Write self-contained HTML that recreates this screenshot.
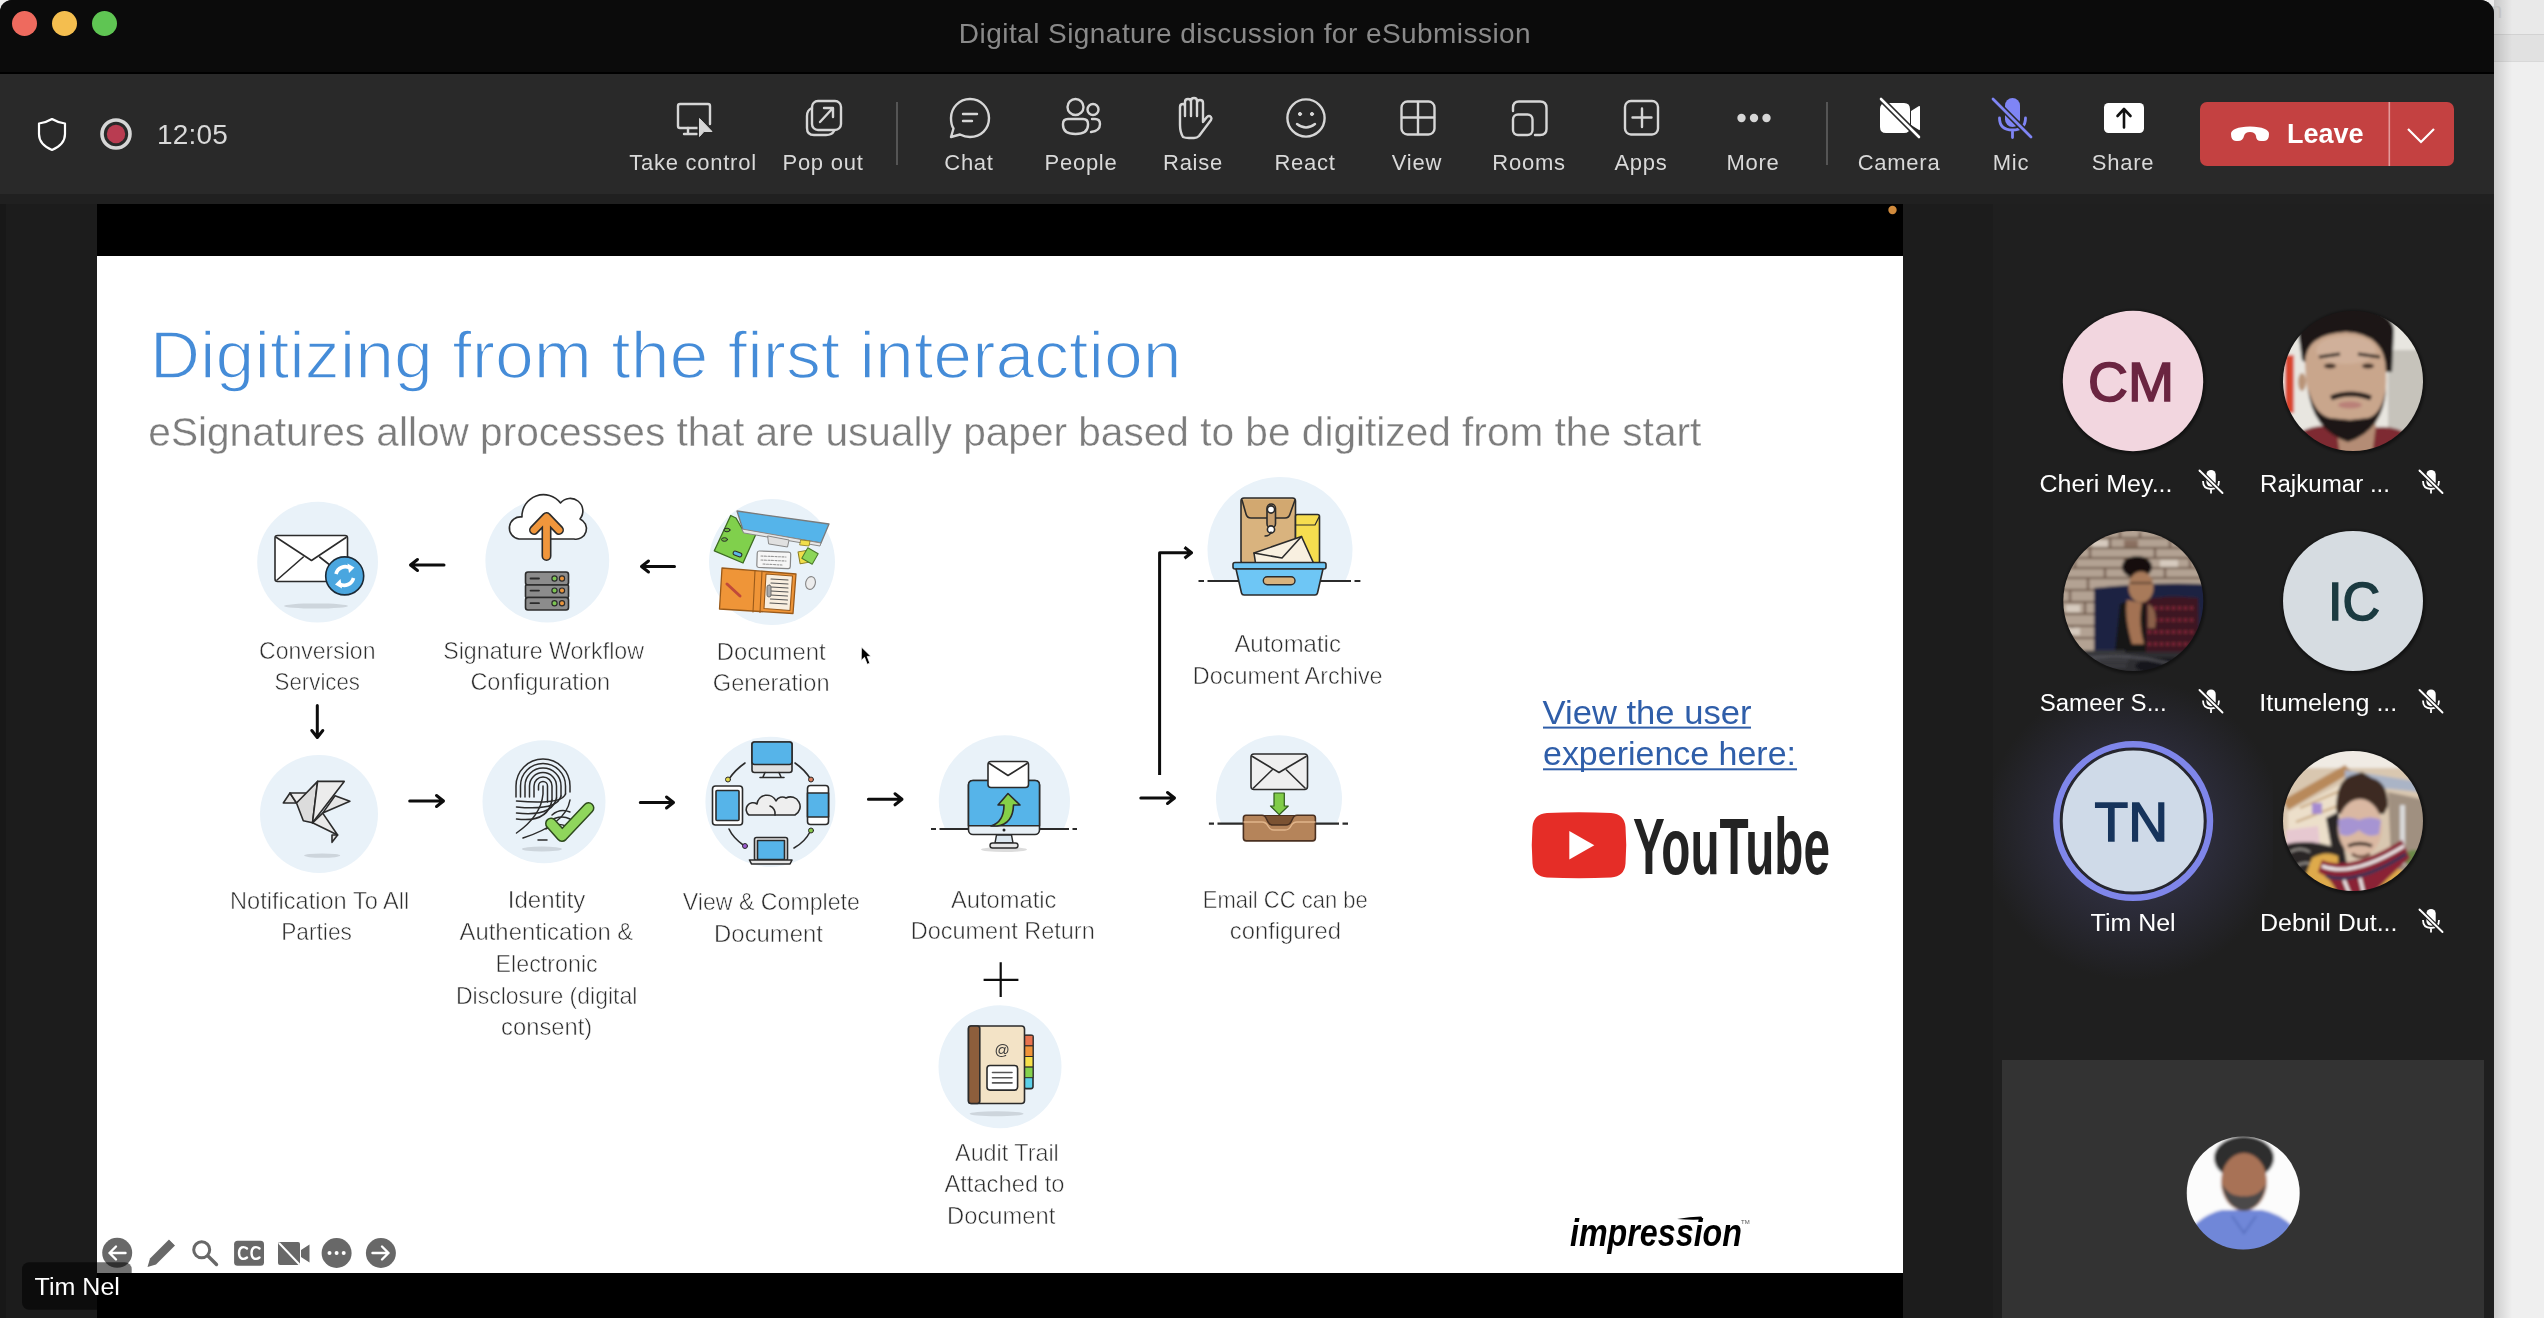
<!DOCTYPE html>
<html><head><meta charset="utf-8">
<style>
html,body{margin:0;padding:0;width:2544px;height:1318px;overflow:hidden;background:#ececec;}
body{position:relative;font-family:"Liberation Sans",sans-serif;}
.a{position:absolute;}
svg,#title,.lab{will-change:transform;}
#outside{left:2494px;top:0;width:50px;height:1318px;background:#efefef;}
#win{left:0;top:0;width:2494px;height:1318px;background:#1c1c1c;border-top-right-radius:14px;border-top-left-radius:12px;overflow:hidden;}
#titlebar{left:0;top:0;width:2494px;height:72px;background:#0b0b0b;border-bottom:2px solid #000;}
.tl{width:25px;height:25px;border-radius:50%;top:11px;}
#title{left:0;top:18px;width:2490px;text-align:center;color:#8a8a8a;font-size:28px;letter-spacing:0.45px;}
#toolbar{left:0;top:74px;width:2494px;height:120px;background:#292929;}
#strip{left:0;top:194px;width:2494px;height:10px;background:#202020;}
.tb{top:0;width:120px;height:121px;}
.tb svg{position:absolute;left:40px;top:26px;}
.tb span{position:absolute;left:-20px;width:160px;top:75px;text-align:center;color:#d9d9d9;font-size:22px;letter-spacing:0.3px;}
.lab{top:150px;width:200px;text-align:center;color:#d9d9d9;font-size:22px;letter-spacing:0.75px;}
.sep{width:2px;background:#4a4a4a;top:29px;height:63px;}
</style></head>
<body>
<div id="outside" class="a"></div>
<div class="a" style="left:2494px;top:0;width:50px;height:34px;background:#e9e9e9;"></div>
<div class="a" style="left:2494px;top:34px;width:50px;height:26px;background:#e1e1e1;border-top:1px solid #d2d2d2;border-bottom:1px solid #d8d8d8;"></div>
<div class="a" style="left:2494px;top:0;width:18px;height:1318px;background:linear-gradient(90deg,rgba(0,0,0,0.14),rgba(0,0,0,0));"></div>
<div class="a" style="left:2490px;top:-2px;font-size:22px;color:#c4c4c4;">n</div>
<div id="win" class="a">
  <div id="titlebar" class="a">
    <div class="a tl" style="left:12px;background:#ee6a5e;"></div>
    <div class="a tl" style="left:52px;background:#f4be4f;"></div>
    <div class="a tl" style="left:92px;background:#5fc553;"></div>
    <div id="title" class="a">Digital Signature discussion for eSubmission</div>
  </div>
  <div id="toolbar" class="a"></div>
  <div id="strip" class="a"></div>

  <svg class="a" style="left:0;top:0;" width="2494" height="200" viewBox="0 0 2494 200">
    <!-- shield -->
    <path d="M52 119 C47 122 43 123 39 123.5 L39 134 C39 142 45 147 52 150 C59 147 65 142 65 134 L65 123.5 C61 123 57 122 52 119 Z" fill="none" stroke="#fff" stroke-width="2.2" stroke-linejoin="round"/>
    <!-- record -->
    <circle cx="116" cy="134" r="14" fill="none" stroke="#d6d6d6" stroke-width="3.6"/>
    <circle cx="116" cy="134" r="9.2" fill="#b93c51"/>
    <g fill="none" stroke="#d6d6d6" stroke-width="2.4" stroke-linecap="round" stroke-linejoin="round">
      <!-- take control -->
      <path d="M700 128 L680 128 Q678 128 678 126 L678 106 Q678 104 680 104 L708 104 Q710 104 710 106 L710 124"/>
      <path d="M688 128 L688 134 M684 134 L697 134"/>
      <!-- pop out -->
      <rect x="812" y="101" width="29" height="29" rx="6"/>
      <path d="M812 108 Q807 110 807 116 L807 128 Q807 135 814 135 L826 135 Q832 135 834 131"/>
      <path d="M820 122 L832 109 M824 108 L833 108 L833 117"/>
      <!-- chat -->
      <path d="M970 99 C981 99 989 108 989 118 C989 129 981 137 970 137 C966 137 963 136 960 134.5 L951 137 L953.5 128.5 C951.5 125.5 951 122 951 118 C951 108 959 99 970 99 Z"/>
      <path d="M963 114 L977 114 M963 121 L972 121"/>
      <!-- people -->
      <circle cx="1075.5" cy="107" r="8"/>
      <circle cx="1093" cy="109.5" r="5.5"/>
      <path d="M1068 119 L1083 119 Q1088 119 1088 124 L1088 125 Q1088 134 1075.5 134 Q1063 134 1063 125 L1063 124 Q1063 119 1068 119 Z"/>
      <path d="M1092 119 L1095 119 Q1100 119 1100 124 Q1100 131 1091 132"/>
      <!-- raise -->
      <path d="M1183 137 Q1180 132 1180 125 L1180 107 Q1180 104 1183 104 Q1185 104 1185 107 L1185 116 L1185 102 Q1185 99 1188 99 Q1191 99 1191 102 L1191 116 L1191 101 Q1191 98 1194 98 Q1197 98 1197 101 L1197 116 L1197 103 Q1197 100 1200 100 Q1203 100 1203 103 L1203 122 L1207 117 Q1209 115 1211 117 Q1212 118 1211 120 L1199 136 Q1197 138 1194 138 L1189 138 Q1185 138 1183 137 Z"/>
      <!-- react -->
      <circle cx="1306" cy="118" r="18.6"/>
      <circle cx="1300" cy="114" r="1.6" fill="#d6d6d6" stroke-width="1"/><circle cx="1312" cy="114" r="1.6" fill="#d6d6d6" stroke-width="1"/>
      <path d="M1297 124 Q1306 131 1315 124"/>
      <!-- view -->
      <rect x="1401.5" y="101.5" width="33" height="33" rx="6"/>
      <path d="M1418 102 L1418 134 M1402 117.5 L1434 117.5"/>
      <!-- rooms -->
      <path d="M1513 111 L1513 108 Q1513 101.5 1519 101.5 L1540 101.5 Q1546.5 101.5 1546.5 108 L1546.5 129 Q1546.5 135 1540 135 L1535 135"/>
      <rect x="1513" y="114.5" width="19.5" height="20.5" rx="5"/>
      <!-- apps -->
      <rect x="1625" y="101" width="33" height="33.5" rx="6"/>
      <path d="M1642 108.5 L1642 127 M1632.5 117.5 L1651.5 117.5"/>
    </g>
    <path d="M697.5 116 L697.5 139 L703.5 133.5 L714 133.5 Z" fill="#292929"/>
    <path d="M699.5 118.5 L699.5 136.5 L704 131.5 L712 131.5 Z" fill="#d6d6d6" stroke="#d6d6d6" stroke-width="1" stroke-linejoin="round"/>
    <circle cx="1741.5" cy="118" r="4.2" fill="#d6d6d6"/>
    <circle cx="1754" cy="118" r="4.2" fill="#d6d6d6"/>
    <circle cx="1766.5" cy="118" r="4.2" fill="#d6d6d6"/>
    <!-- separators -->
    <rect x="896" y="102" width="2" height="63" fill="#555"/>
    <rect x="1826" y="102" width="2" height="63" fill="#555"/>
    <!-- camera -->
    <path d="M1886 103 L1904 103 Q1910 103 1910 109 L1910 127 Q1910 133 1904 133 L1886 133 Q1880 133 1880 127 L1880 109 Q1880 103 1886 103 Z M1911 111 L1919 106 Q1920 105.5 1920 107 L1920 129 Q1920 130.5 1919 130 L1911 125 Z" fill="#fff"/>
    <path d="M1881 99 L1919 137" stroke="#292929" stroke-width="6"/>
    <path d="M1881 99 L1919 137" stroke="#fff" stroke-width="2.6" stroke-linecap="round"/>
    <!-- mic -->
    <rect x="2005" y="98" width="15" height="29" rx="7.5" fill="#7f85f5"/>
    <path d="M1999.5 118 Q1999.5 130 2012.5 130 Q2025.5 130 2025.5 118 M2012.5 130 L2012.5 137.5" fill="none" stroke="#7f85f5" stroke-width="2.8" stroke-linecap="round"/>
    <path d="M1993 99 L2031 137" stroke="#292929" stroke-width="6"/>
    <path d="M1993 99 L2031 137" stroke="#7f85f5" stroke-width="2.8" stroke-linecap="round"/>
    <!-- share -->
    <rect x="2104" y="103" width="40" height="30" rx="4.5" fill="#fff"/>
    <path d="M2124 127.5 L2124 109 M2117.5 116 L2124 109 L2130.5 116" fill="none" stroke="#111" stroke-width="2.6" stroke-linecap="round" stroke-linejoin="round"/>
    <!-- leave -->
    <rect x="2200" y="102" width="254" height="64" rx="7" fill="#c44141"/>
    <rect x="2388.5" y="102" width="1.6" height="64" fill="#e39a9a"/>
    <path d="M2231 134 Q2231 127 2250 126.5 Q2269 127 2269 134 Q2269 141 2264 141 L2261 141 Q2256 141 2256 136 Q2255 132 2250 132 Q2245 132 2244 136 Q2243 141 2238 141 L2236 141 Q2231 141 2231 134 Z" fill="#fff"/>
    <path d="M2408 129 L2421 142 L2434 129" fill="none" stroke="#fff" stroke-width="2.2"/>
  </svg>
  <div class="a" style="left:157px;top:119px;font-size:28px;color:#d9d9d9;letter-spacing:0.2px;">12:05</div>
  <div class="a" style="left:2287px;top:119px;font-size:27px;font-weight:bold;color:#fff;">Leave</div>
  <div class="a lab" style="left:593px;">Take control</div>
  <div class="a lab" style="left:723px;">Pop out</div>
  <div class="a lab" style="left:869px;">Chat</div>
  <div class="a lab" style="left:981px;">People</div>
  <div class="a lab" style="left:1093px;">Raise</div>
  <div class="a lab" style="left:1205px;">React</div>
  <div class="a lab" style="left:1317px;">View</div>
  <div class="a lab" style="left:1429px;">Rooms</div>
  <div class="a lab" style="left:1541px;">Apps</div>
  <div class="a lab" style="left:1653px;">More</div>
  <div class="a lab" style="left:1799px;">Camera</div>
  <div class="a lab" style="left:1911px;">Mic</div>
  <div class="a lab" style="left:2023px;">Share</div>

<svg class="a" style="left:0;top:0;" width="2544" height="1318" viewBox="0 0 2544 1318" font-family="Liberation Sans, sans-serif">
<rect x="97" y="204" width="1806" height="1114" fill="#000"/>
<rect x="97" y="256" width="1806" height="1017" fill="#fff"/>
<circle cx="1892.5" cy="210" r="4.2" fill="#d08a3c"/>
<g id="circles" fill="#e9f2f9">
  <circle cx="317.6" cy="562.1" r="60.4"/>
  <circle cx="547.3" cy="560.6" r="61.9"/>
  <circle cx="772" cy="562" r="63"/>
  <circle cx="319" cy="814" r="59"/>
  <circle cx="544" cy="801.7" r="61.5"/>
  <circle cx="770.4" cy="801.7" r="65"/>
  <path d="M945.1 829 A65.6 65.6 0 1 1 1063.7 829 Z"/>
  <path d="M1214.7 581 A72.5 72.5 0 1 1 1345.3 581 Z"/>
  <path d="M1221.3 823.6 A63 63 0 1 1 1336.7 823.6 Z"/>
  <circle cx="1000" cy="1066.8" r="61.5"/>
</g>
<g fill="#cdd5dc">
  <ellipse cx="316" cy="606" rx="32" ry="2.6"/>
  <ellipse cx="322.2" cy="855.6" rx="18" ry="2.2"/>
  <ellipse cx="541.9" cy="849" rx="20" ry="2.5"/>
  <ellipse cx="996.6" cy="1113.7" rx="27" ry="2.5"/>
  <ellipse cx="1004" cy="849.5" rx="23" ry="2.5" fill="#dcdcdc"/>
</g>
<!-- arrows -->
<g fill="none" stroke="#0d0d0d" stroke-width="3" stroke-linecap="round" stroke-linejoin="round">
  <path d="M444 565 L411 565 M417.5 559.5 L410.5 565 L417.5 570.5"/>
  <path d="M674.5 566.5 L642 566.5 M648.5 561 L641.5 566.5 L648.5 572"/>
  <path d="M409.7 801 L443 801 M436.5 795.5 L443.5 801 L436.5 806.5"/>
  <path d="M640.3 802.5 L673 802.5 M666.5 797 L673.5 802.5 L666.5 808"/>
  <path d="M868.4 799.3 L901.5 799.3 M895 793.8 L902 799.3 L895 804.8"/>
  <path d="M1140.8 798 L1174 798 M1167.5 792.5 L1174.5 798 L1167.5 803.5"/>
  <path d="M317.3 705.5 L317.3 737 M311.8 730.5 L317.3 737.5 L322.8 730.5"/>
  <path d="M1159.6 775 L1159.6 552.7 L1191 552.7 M1184.5 547.2 L1191.5 552.7 L1184.5 558.2" stroke-linecap="butt" stroke-width="3"/>
  <path d="M983.6 979.8 L1018.4 979.8 M1000.7 962.3 L1000.7 997" stroke-width="2.2" stroke-linecap="butt"/>
</g>
<!-- dashed floor lines -->
<g stroke="#2b2b2b" stroke-width="2.2" fill="none">
  <path d="M931 829 L936 829 M939.5 829 L1069 829 M1072.5 829 L1077 829"/>
  <path d="M1198.5 581 L1204 581 M1207.5 581 L1351 581 M1354.5 581 L1360.4 581"/>
  <path d="M1208.9 823.6 L1214 823.6 M1217.5 823.6 L1339 823.6 M1342.5 823.6 L1348 823.6"/>
</g>
<g stroke="#2b2b2b" stroke-width="1.6" stroke-linejoin="round" stroke-linecap="round">
  <!-- 1 conversion -->
  <rect x="275" y="535.5" width="72.5" height="46" rx="2.5" fill="#fff"/>
  <path d="M276.5 537.5 L311.5 560.5 L346 537.5" fill="none"/>
  <path d="M277 580 L303.3 557 M319.6 557 L335 569" fill="none"/>
  <circle cx="344.7" cy="575.9" r="19" fill="#4aa6df" stroke="#1c2a36"/>
  <path d="M336 574 A9.5 9.5 0 0 1 350 568" fill="none" stroke="#fff" stroke-width="3.6" stroke-linecap="butt"/>
  <path d="M347.5 563.5 L354.5 567.5 L349 573 Z" fill="#fff" stroke="none"/>
  <path d="M353.5 578 A9.5 9.5 0 0 1 339.5 584" fill="none" stroke="#fff" stroke-width="3.6" stroke-linecap="butt"/>
  <path d="M342 588.5 L335 584.5 L340.5 579 Z" fill="#fff" stroke="none"/>
  <!-- 2 workflow -->
  <path d="M519 539 A11 11 0 1 1 522 517 A21.5 21.5 0 0 1 560.5 503 A12.5 12.5 0 0 1 580 519 A10.5 10.5 0 0 1 574 539 Z" fill="#fff"/>
  <path d="M546.5 556 L546.5 518 M534 530 L546.5 517 L559 530" fill="none" stroke-width="10"/>
  <path d="M546.5 556 L546.5 518 M534 530 L546.5 517 L559 530" fill="none" stroke="#f0963c" stroke-width="6.8"/>
  <rect x="525.5" y="572" width="43" height="13" rx="2.5" fill="#8c8c8c"/>
  <rect x="525.5" y="585" width="43" height="12.5" rx="1" fill="#8c8c8c"/>
  <rect x="525.5" y="597.5" width="43" height="12.5" rx="2.5" fill="#8c8c8c"/>
  <path d="M530.5 578.5 L539 578.5 M530.5 590.6 L539 590.6 M530.5 603.2 L539 603.2" fill="none" stroke-width="1.8"/>
  <g stroke-width="1.2">
    <circle cx="554.5" cy="578.5" r="2.6" fill="#7cc552"/><circle cx="562" cy="578.5" r="2.6" fill="#e9943c"/>
    <circle cx="554.5" cy="590.6" r="2.6" fill="#7cc552"/><circle cx="562" cy="590.6" r="2.6" fill="#e9943c"/>
    <circle cx="554.5" cy="603.2" r="2.6" fill="#7cc552"/><circle cx="562" cy="603.2" r="2.6" fill="#e9943c"/>
  </g>
  <!-- 3 doc generation -->
  <path d="M714.3 550.8 L730.7 515.5 L736 518 L742 528.5 L756 534 L743 563 Z" fill="#80d04c" stroke="#3d6b22" stroke-width="1.3"/>
  <ellipse cx="727" cy="530" rx="3" ry="1.8" fill="#6ab83c" stroke-width="1"/>
  <ellipse cx="724.5" cy="539.5" rx="3" ry="1.8" fill="#6ab83c" stroke-width="1"/>
  <rect x="733" y="552" width="9" height="4" rx="2" fill="#5cb8e8" stroke-width="1" transform="rotate(20 737.5 554)"/>
  <path d="M737 511 L829 524 L821 543 L743 530 Z" fill="#55b4ea" stroke="#7a7a7a" stroke-width="1.3"/>
  <path d="M742 529 L821 543 L820 546 L744 533 Z" fill="#e6e6e6" stroke="#888" stroke-width="1"/>
  <path d="M768 536 L789 540 L787.5 547 L769 544 Z" fill="#e0e0e0" stroke="#888" stroke-width="1"/>
  <path d="M801 540 L810 541 L809 546 L800 545 Z" fill="#f1de4a" stroke="#8a7a20" stroke-width="0.8"/>
  <rect x="757" y="551.5" width="33.5" height="16.5" rx="2" fill="#f6f6f6" stroke="#888" stroke-width="1.2" transform="rotate(2 773 560)"/>
  <path d="M761 556 L786 557 M761 560 L786 561 M763 564 L782 565" stroke="#999" stroke-width="1.1" stroke-dasharray="2 1.5"/>
  <rect x="799" y="551" width="10" height="12" fill="#f1de4a" stroke="#8a7a20" stroke-width="1" transform="rotate(-10 804 557)"/>
  <rect x="804" y="550" width="12" height="12" fill="#8cd658" stroke="#4a7a2a" stroke-width="1" transform="rotate(30 810 556)"/>
  <ellipse cx="810.5" cy="583" rx="4.8" ry="6.5" fill="#ececec" stroke="#888" stroke-width="1.1" transform="rotate(15 810.5 583)"/>
  <path d="M722 568 L796 574 L793 613.5 L719.5 609 Z" fill="#ef9538" stroke="#9a5a1a" stroke-width="1.3"/>
  <path d="M755 570.5 L753 612 M762 571 L760 612.5" fill="none" stroke="#9a5a1a" stroke-width="1.1"/>
  <path d="M766 574 L792.5 576 L790 610.5 L764 608.5 Z" fill="#f8eedf" stroke="#9a5a1a" stroke-width="1.1"/>
  <path d="M771 579 L788 580 M771 583 L788 584 M771 587 L788 588 M771 591 L788 592 M770.5 595 L787.5 596 M770.5 599 L787.5 600 M770 603 L787 604" stroke="#555" stroke-width="1.1"/>
  <rect x="767" y="585" width="4" height="12" rx="2" fill="#aaa" stroke="#666" stroke-width="0.9"/>
  <path d="M727 584 L740 596" stroke="#c04a3a" stroke-width="3"/>
  <!-- 4 bird -->
  <path d="M283.3 803 L290 793 L296.5 803 Z" fill="#e3e3e3"/>
  <path d="M290 793 L307.4 793 L296.5 803 Z" fill="#ededed"/>
  <path d="M317.6 781.4 L296.5 803 L303.3 820.8 L312.5 822.8 Z" fill="#dcdcdc"/>
  <path d="M317.6 781.4 L344.2 781.4 L312.5 822.8 Z" fill="#ececec"/>
  <path d="M335 795.7 L349.9 801.3 L322.7 813.1 Z" fill="#e6e6e6"/>
  <path d="M322.7 813.1 L337.6 835 L312.5 822.8 Z" fill="#e9e9e9"/>
  <path d="M332 835 L337.6 835 L332 842.3 Z" fill="#e3e3e3"/>
  <!-- 5 fingerprint -->
  <g fill="none" stroke-width="1.5">
    <path d="M516 797 L516 786 A27 27 0 0 1 570 786 L570 792"/>
    <path d="M520.5 797 L520.5 786 A22.5 22.5 0 0 1 565.5 786 L565.5 794"/>
    <path d="M525 797 L525 786 A18 18 0 0 1 561 786 L561 796"/>
    <path d="M529.5 797 L529.5 786 A13.5 13.5 0 0 1 556.5 786 L556.5 798"/>
    <path d="M534 797 L534 786 A9 9 0 0 1 552 786 L552 800"/>
    <path d="M538.5 790 L538.5 786 A4.5 4.5 0 0 1 547.5 786 L547.5 802"/>
    <path d="M543 786 L543 794 Q541 816 516.5 833"/>
    <path d="M565.5 794 Q561.5 805 516.5 801"/>
    <path d="M561 796 Q557 811 516.5 807"/>
    <path d="M556.5 798 Q552.5 817 516.5 813"/>
    <path d="M552 800 Q548 823 516.5 819"/>
    <path d="M570 800 Q566 824 523 838"/>
    <path d="M552 815 Q560 808 570 812 M548 822 Q560 814 570 819 M546 829 Q556 822 566 826"/>
    <path d="M538 840 L547 840"/>
  </g>
  <path d="M551 823.5 L562.1 836 L588.5 808" fill="none" stroke="#2e4a1e" stroke-width="12"/>
  <path d="M551 823.5 L562.1 836 L588.5 808" fill="none" stroke="#8fd65c" stroke-width="9" stroke-linecap="round"/>
  <!-- 6 devices -->
  <rect x="752" y="742" width="40" height="30.5" rx="2.5" fill="#e0e0e0"/>
  <rect x="752" y="742" width="40" height="22.5" rx="2.5" fill="#56b4e9"/>
  <path d="M765 772.5 L763 777 M779 772.5 L781 777 M760 777.5 L784 777.5" fill="none" stroke-width="1.6"/>
  <rect x="712.5" y="786" width="30" height="39" rx="3" fill="#fff"/>
  <rect x="716" y="790.5" width="23" height="30" rx="1" fill="#56b4e9"/>
  <rect x="807.5" y="785.5" width="21" height="39" rx="3" fill="#fff"/>
  <rect x="807.5" y="793" width="21" height="24" fill="#56b4e9"/>
  <rect x="754.5" y="837.5" width="33" height="23" rx="2" fill="#e6e6e6"/>
  <rect x="757.5" y="840.5" width="27" height="19" fill="#56b4e9"/>
  <path d="M749.5 860 L792 860 L790 864 L751.5 864 Z" fill="#e6e6e6"/>
  <path d="M749 815 A6 6 0 0 1 757 804 A10 10 0 0 1 776 801 A7 7 0 0 1 786 798 A9 9 0 0 1 795 815 Z" fill="#eeeeee"/>
  <path d="M775 815 A8 8 0 0 0 770 806" fill="none"/>
  <g fill="none" stroke-width="1.6">
    <path d="M745 763 Q735 770 729 779"/>
    <path d="M795 763 Q805 770 810.5 779"/>
    <path d="M729 829 Q733 838 744.5 846"/>
    <path d="M794 848 Q805 842 810.5 831"/>
  </g>
  <circle cx="728" cy="779.5" r="2.5" fill="#e3d84a" stroke-width="1"/>
  <circle cx="811" cy="779.5" r="2.5" fill="#d98060" stroke-width="1"/>
  <circle cx="745" cy="846" r="2.5" fill="#9a5ad0" stroke-width="1"/>
  <circle cx="811" cy="830.5" r="2.5" fill="#86c84a" stroke-width="1"/>
  <!-- 7 auto doc return -->
  <rect x="968.5" y="780.5" width="71" height="54" rx="4.5" fill="#e8f0f6"/>
  <path d="M973 780.5 L1035 780.5 Q1039.5 780.5 1039.5 785 L1039.5 825.7 L968.5 825.7 L968.5 785 Q968.5 780.5 973 780.5 Z" fill="#56b4e9"/>
  <path d="M996.5 835 L995 843 L1013 843 L1011.5 835 Z" fill="#dde8f0" stroke-width="1.4"/>
  <rect x="990" y="843" width="28" height="5" rx="2.5" fill="#e6e6e6" stroke-width="1.4"/>
  <circle cx="1004" cy="830" r="1.5" fill="#222" stroke="none"/>
  <path d="M991 826 Q1004 822 1004 805 L998 805 L1008 793.5 L1020 805 L1013.5 805 Q1013 824 997 826 Z" fill="#86cf48"/>
  <rect x="988" y="761.5" width="40.5" height="26" rx="3" fill="#fff"/>
  <path d="M989.5 763.5 L1008 775.5 L1027 763.5" fill="none"/>
  <!-- 8 archive -->
  <rect x="1241" y="498" width="54.5" height="66" rx="3" fill="#d9b37e"/>
  <path d="M1242 500 L1246 514 Q1247 518 1251 518 L1285 518 Q1289 518 1290 514 L1295 500" fill="#d2a870"/>
  <rect x="1267" y="504" width="8.5" height="24" rx="4.25" fill="#c8a070"/>
  <circle cx="1271" cy="509.5" r="3.6" fill="#fff"/><circle cx="1271" cy="529.5" r="3.6" fill="#fff"/>
  <path d="M1265 536 Q1270 536 1271 532" fill="none" stroke-width="1.3"/>
  <rect x="1295.5" y="514.5" width="24" height="50" rx="2" fill="#f6dd4f"/>
  <path d="M1295.5 525 L1315 525 L1319 517" fill="none" stroke-width="1.2"/>
  <path d="M1254 553 L1301.5 536.5 L1313.5 563 L1255.5 563 Z" fill="#f8f0e0"/>
  <path d="M1254 553 L1282 558 L1301.5 536.5" fill="none"/>
  <path d="M1235 562.5 L1324 562.5 Q1326 562.5 1326 564.5 L1326 567 Q1326 569 1324 569 L1235 569 Q1233 569 1233 567 L1233 564.5 Q1233 562.5 1235 562.5 Z" fill="#6ec6f5"/>
  <path d="M1236 569 L1323 569 L1317.5 593 Q1317 595 1315 595 L1244 595 Q1242 595 1241.5 593 Z" fill="#6ec6f5"/>
  <rect x="1263.3" y="576.7" width="31.7" height="8" rx="4" fill="#d9b37e" stroke-width="1.4"/>
  <!-- 9 email cc -->
  <rect x="1251" y="754" width="56.5" height="35.5" rx="3" fill="#efefef"/>
  <path d="M1252.5 756.5 L1279 772.5 L1306 756.5 M1253.5 788 L1272 770 M1286.5 770 L1305 788" fill="none"/>
  <path d="M1274 793 L1284.3 793 L1284.3 806 L1288.3 806 L1279.2 814.7 L1270.5 806 L1274 806 Z" fill="#80cc48" stroke="#2e5a1a" stroke-width="1.2"/>
  <path d="M1263 815.5 L1296 815.5 L1292 828 L1267 828 Z" fill="#7b5232" stroke="#4a3020" stroke-width="1.2"/>
  <path d="M1246 815.2 L1262 815.2 Q1265 815.2 1266.5 819 L1268 822 Q1269.5 825 1273 825 L1286 825 Q1289.5 825 1291 822 L1292.5 819 Q1294 815.2 1297 815.2 L1313 815.2 Q1315.4 815.2 1315.4 818 L1315.4 838 Q1315.4 840.9 1312.5 840.9 L1246.3 840.9 Q1243.4 840.9 1243.4 838 L1243.4 818 Q1243.4 815.2 1246 815.2 Z" fill="#b5845a" stroke="#4a3020"/>
  
  <path d="M1244 822 L1262 822 Q1266 822 1268 826 Q1270 830 1274 830 L1285 830 Q1289 830 1291 826 Q1293 822 1297 822 L1315 822" fill="none" stroke="#e0b48a" stroke-width="1.4"/>
  <!-- 10 audit -->
  <rect x="1024" y="1035.3" width="9" height="53.3" rx="2" fill="#5bd0e8"/>
  <rect x="1024" y="1035.3" width="9" height="10.6" fill="#e8734f" stroke-width="1"/>
  <rect x="1024" y="1045.9" width="9" height="10.6" fill="#f0943a" stroke-width="1"/>
  <rect x="1024" y="1056.5" width="9" height="10.6" fill="#f7e04a" stroke-width="1"/>
  <rect x="1024" y="1067.1" width="9" height="10.6" fill="#85d24c" stroke-width="1"/>
  <rect x="968.5" y="1026" width="56" height="77.5" rx="3" fill="#f3e3c6"/>
  <rect x="968.5" y="1026" width="11.3" height="77.5" rx="2.5" fill="#8d5e3c"/>
  <text x="994.5" y="1054.5" font-size="15" fill="#3a3a3a" stroke="none" font-family="Liberation Sans, sans-serif">@</text>
  <rect x="987" y="1065.5" width="30.6" height="24.6" rx="3" fill="#fff"/>
  <path d="M992.5 1072.5 L1012 1072.5 M992.5 1077.7 L1012 1077.7 M992.5 1082.9 L1012 1082.9" fill="none" stroke="#555"/>
</g>
<!-- mouse cursor -->
<path d="M861.4 647 L861.2 660.5 L864.5 657.3 L867.2 664.3 L869.8 663.2 L867.2 656.4 L871 656.4 Z" fill="#000" stroke="#fff" stroke-width="0.8"/>
<!-- slide toolbar -->
<g fill="#686868">
  <circle cx="117.2" cy="1252.8" r="15"/>
  <circle cx="336.6" cy="1253" r="15"/>
  <circle cx="380.9" cy="1253" r="15"/>
  <rect x="234.1" y="1240.8" width="29.9" height="24.9" rx="3.5"/>
  <path d="M280 1242 L298 1242 Q300 1242 300 1244 L300 1263 Q300 1265 298 1265 L280 1265 Q278 1265 278 1263 L278 1244 Q278 1242 280 1242 Z M301 1250 L309.5 1244.5 L309.5 1262.5 L301 1257 Z"/>
  <path d="M147.5 1267 L150 1258.5 L169 1239.5 L175 1245.5 L156 1264.5 Z"/>
</g>
<g fill="none" stroke="#686868">
  <circle cx="201.7" cy="1249.8" r="8" stroke-width="3"/>
  <path d="M208 1256 L216.5 1264.5" stroke-width="3.4" stroke-linecap="round"/>
</g>
<g fill="none" stroke="#fff" stroke-width="2.4" stroke-linecap="round" stroke-linejoin="round">
  <path d="M125.5 1253 L109.5 1253 M116 1246.5 L109.5 1253 L116 1259.5"/>
  <path d="M372.5 1253 L388.5 1253 M382 1246.5 L388.5 1253 L382 1259.5"/>
  <path d="M279.5 1243.5 L299 1264" stroke-width="2"/>
  <path d="M170 1238.5 L176 1244.5" stroke-width="2"/>
  <path d="M247 1248.5 Q244.5 1246.5 241.5 1247.5 Q239 1249 239 1253 Q239 1257 241.5 1258.5 Q244.5 1259.5 247 1257.5"/>
  <path d="M259.5 1248.5 Q257 1246.5 254 1247.5 Q251.5 1249 251.5 1253 Q251.5 1257 254 1258.5 Q257 1259.5 259.5 1257.5"/>
</g>
<g fill="#fff"><circle cx="329.5" cy="1253" r="2"/><circle cx="336.6" cy="1253" r="2"/><circle cx="343.7" cy="1253" r="2"/></g>
<!-- Tim Nel name box -->
<rect x="22" y="1262.2" width="109.7" height="47.5" rx="7" fill="rgba(0,0,0,0.55)"/>
<!-- youtube -->
<path d="M1547 813 Q1579 811.5 1611 813 Q1624.5 814 1625.5 827 Q1627 845 1625.5 863.5 Q1624.5 876.5 1611 877.5 Q1579 879 1547 877.5 Q1533.5 876.5 1532.5 863.5 Q1531 845 1532.5 827 Q1533.5 814 1547 813 Z" fill="#e52d27"/>
<path d="M1569.3 831 L1594.3 845.3 L1569.3 859.5 Z" fill="#fff"/>
<!-- impression swoosh & tm -->
<path d="M1677 1219 Q1690 1216.5 1701 1216.5 Q1703 1217.5 1701 1219.5 Q1690 1220 1677 1219 Z" fill="#000"/>
<text x="1741" y="1224" font-size="6" fill="#555" font-family="Liberation Sans, sans-serif">TM</text>

<text x="149.7" y="378" textLength="1032" lengthAdjust="spacingAndGlyphs" font-size="67" fill="#458cd8" font-weight="normal" font-style="normal" stroke="#fff" stroke-width="1.6">Digitizing from the first interaction</text>
<text x="148.3" y="446" textLength="1553" lengthAdjust="spacingAndGlyphs" font-size="41" fill="#7c7c7c" font-weight="normal" font-style="normal" stroke="#fff" stroke-width="0.35">eSignatures allow processes that are usually paper based to be digitized from the start</text>
<text x="259.0" y="659" textLength="116.5" lengthAdjust="spacingAndGlyphs" font-size="24" fill="#2c2c2c" font-weight="normal" font-style="normal" stroke="#fff" stroke-width="0.55">Conversion</text>
<text x="274.6" y="690" textLength="85.4" lengthAdjust="spacingAndGlyphs" font-size="24" fill="#2c2c2c" font-weight="normal" font-style="normal" stroke="#fff" stroke-width="0.55">Services</text>
<text x="443.2" y="659" textLength="200.8" lengthAdjust="spacingAndGlyphs" font-size="24" fill="#2c2c2c" font-weight="normal" font-style="normal" stroke="#fff" stroke-width="0.55">Signature Workflow</text>
<text x="470.4" y="690" textLength="139.8" lengthAdjust="spacingAndGlyphs" font-size="24" fill="#2c2c2c" font-weight="normal" font-style="normal" stroke="#fff" stroke-width="0.55">Configuration</text>
<text x="716.8" y="659.5" textLength="108.8" lengthAdjust="spacingAndGlyphs" font-size="24" fill="#2c2c2c" font-weight="normal" font-style="normal" stroke="#fff" stroke-width="0.55">Document</text>
<text x="712.8" y="690.6" textLength="116.7" lengthAdjust="spacingAndGlyphs" font-size="24" fill="#2c2c2c" font-weight="normal" font-style="normal" stroke="#fff" stroke-width="0.55">Generation</text>
<text x="230.1" y="909" textLength="179.1" lengthAdjust="spacingAndGlyphs" font-size="24" fill="#2c2c2c" font-weight="normal" font-style="normal" stroke="#fff" stroke-width="0.55">Notification To All</text>
<text x="281.2" y="940.4" textLength="70.7" lengthAdjust="spacingAndGlyphs" font-size="24" fill="#2c2c2c" font-weight="normal" font-style="normal" stroke="#fff" stroke-width="0.55">Parties</text>
<text x="507.8" y="908.1" textLength="77.6" lengthAdjust="spacingAndGlyphs" font-size="24" fill="#2c2c2c" font-weight="normal" font-style="normal" stroke="#fff" stroke-width="0.55">Identity</text>
<text x="459.6" y="939.8" textLength="173.6" lengthAdjust="spacingAndGlyphs" font-size="24" fill="#2c2c2c" font-weight="normal" font-style="normal" stroke="#fff" stroke-width="0.55">Authentication &amp;</text>
<text x="495.6" y="971.8" textLength="102.1" lengthAdjust="spacingAndGlyphs" font-size="24" fill="#2c2c2c" font-weight="normal" font-style="normal" stroke="#fff" stroke-width="0.55">Electronic</text>
<text x="456.0" y="1003.7" textLength="181.3" lengthAdjust="spacingAndGlyphs" font-size="24" fill="#2c2c2c" font-weight="normal" font-style="normal" stroke="#fff" stroke-width="0.55">Disclosure (digital</text>
<text x="501.1" y="1035.4" textLength="91.1" lengthAdjust="spacingAndGlyphs" font-size="24" fill="#2c2c2c" font-weight="normal" font-style="normal" stroke="#fff" stroke-width="0.55">consent)</text>
<text x="682.8" y="910.3" textLength="177.1" lengthAdjust="spacingAndGlyphs" font-size="24" fill="#2c2c2c" font-weight="normal" font-style="normal" stroke="#fff" stroke-width="0.55">View &amp; Complete</text>
<text x="714.1" y="941.7" textLength="108.9" lengthAdjust="spacingAndGlyphs" font-size="24" fill="#2c2c2c" font-weight="normal" font-style="normal" stroke="#fff" stroke-width="0.55">Document</text>
<text x="951.0" y="908.1" textLength="105.4" lengthAdjust="spacingAndGlyphs" font-size="24" fill="#2c2c2c" font-weight="normal" font-style="normal" stroke="#fff" stroke-width="0.55">Automatic</text>
<text x="910.8" y="939.3" textLength="183.9" lengthAdjust="spacingAndGlyphs" font-size="24" fill="#2c2c2c" font-weight="normal" font-style="normal" stroke="#fff" stroke-width="0.55">Document Return</text>
<text x="1234.4" y="652.2" textLength="106.5" lengthAdjust="spacingAndGlyphs" font-size="24" fill="#2c2c2c" font-weight="normal" font-style="normal" stroke="#fff" stroke-width="0.55">Automatic</text>
<text x="1192.8" y="683.8" textLength="189.8" lengthAdjust="spacingAndGlyphs" font-size="24" fill="#2c2c2c" font-weight="normal" font-style="normal" stroke="#fff" stroke-width="0.55">Document Archive</text>
<text x="1202.8" y="908" textLength="164.9" lengthAdjust="spacingAndGlyphs" font-size="24" fill="#2c2c2c" font-weight="normal" font-style="normal" stroke="#fff" stroke-width="0.55">Email CC can be</text>
<text x="1229.8" y="939" textLength="111.1" lengthAdjust="spacingAndGlyphs" font-size="24" fill="#2c2c2c" font-weight="normal" font-style="normal" stroke="#fff" stroke-width="0.55">configured</text>
<text x="955.1" y="1160.9" textLength="103.7" lengthAdjust="spacingAndGlyphs" font-size="24" fill="#2c2c2c" font-weight="normal" font-style="normal" stroke="#fff" stroke-width="0.55">Audit Trail</text>
<text x="944.4" y="1191.6" textLength="120.1" lengthAdjust="spacingAndGlyphs" font-size="24" fill="#2c2c2c" font-weight="normal" font-style="normal" stroke="#fff" stroke-width="0.55">Attached to</text>
<text x="947.1" y="1223.5" textLength="108.3" lengthAdjust="spacingAndGlyphs" font-size="24" fill="#2c2c2c" font-weight="normal" font-style="normal" stroke="#fff" stroke-width="0.55">Document</text>
<text x="1542.5" y="724.2" textLength="209" lengthAdjust="spacingAndGlyphs" font-size="34" fill="#2f5ea9" font-weight="normal" font-style="normal" >View the user</text>
<text x="1543" y="765.1" textLength="253" lengthAdjust="spacingAndGlyphs" font-size="34" fill="#2f5ea9" font-weight="normal" font-style="normal" >experience here:</text>
<rect x="1543" y="726.6" width="208" height="2" fill="#2f5ea9"/>
<rect x="1543" y="768.3" width="254" height="2" fill="#2f5ea9"/>
<text x="1633" y="873.7" textLength="197" lengthAdjust="spacingAndGlyphs" font-size="79" fill="#232323" font-weight="bold" font-style="normal" >YouTube</text>
<text x="1570" y="1246" textLength="172" lengthAdjust="spacingAndGlyphs" font-size="39" fill="#000" font-weight="bold" font-style="italic" >impression</text>
<text x="34.5" y="1295" textLength="85.4" lengthAdjust="spacingAndGlyphs" font-size="23" fill="#fff" font-weight="normal" font-style="normal" >Tim Nel</text>
</svg>
<svg class="a" style="left:0;top:0;" width="2544" height="1318" viewBox="0 0 2544 1318" font-family="Liberation Sans, sans-serif">
<defs>
<radialGradient id="glow" cx="2133" cy="830" r="150" gradientUnits="userSpaceOnUse">
  <stop offset="0" stop-color="#3a3a52"/><stop offset="0.55" stop-color="#2b2b38"/><stop offset="1" stop-color="#1f1f1f"/>
</radialGradient>
<clipPath id="cR"><circle cx="2353" cy="381" r="70"/></clipPath>
<clipPath id="cS"><circle cx="2133.3" cy="601" r="70"/></clipPath>
<clipPath id="cD"><circle cx="2353" cy="821" r="70"/></clipPath>
<clipPath id="cB"><circle cx="2243.2" cy="1193" r="56.5"/></clipPath>
<filter id="blur1"><feGaussianBlur stdDeviation="1.5"/></filter>
<filter id="blur3"><feGaussianBlur stdDeviation="3"/></filter>
</defs>
<rect x="1903" y="204" width="591" height="1114" fill="#1c1c1c"/>
<rect x="0" y="204" width="6" height="1114" fill="#181818"/>
<rect x="1993" y="204" width="501" height="1114" fill="#1f1f1f"/>
<rect x="1993" y="680" width="280" height="300" fill="url(#glow)"/>
<rect x="2002" y="1060" width="482" height="258" fill="#333"/>
<circle cx="2133.5" cy="382" r="72.0" fill="rgba(0,0,0,0.45)" filter="url(#blur1)"/>
<circle cx="2353.5" cy="382" r="71.8" fill="rgba(0,0,0,0.45)" filter="url(#blur1)"/>
<circle cx="2133.8" cy="602" r="71.8" fill="rgba(0,0,0,0.45)" filter="url(#blur1)"/>
<circle cx="2353.5" cy="602" r="71.8" fill="rgba(0,0,0,0.45)" filter="url(#blur1)"/>
<circle cx="2353.5" cy="822" r="71.8" fill="rgba(0,0,0,0.45)" filter="url(#blur1)"/>
<circle cx="2133" cy="381" r="70.2" fill="#f2d6df"/>
<text stroke="#6b2541" stroke-width="1.6" x="2088" y="400.9" textLength="86" lengthAdjust="spacingAndGlyphs" font-size="56" fill="#6b2541" font-weight="normal">CM</text>
<circle cx="2353" cy="601" r="70" fill="#d6dce1"/>
<text stroke="#1b3a40" stroke-width="1.6" x="2328" y="620.1" textLength="52" lengthAdjust="spacingAndGlyphs" font-size="54" fill="#1b3a40" font-weight="normal">IC</text>
<circle cx="2133.2" cy="821.1" r="76.5" fill="none" stroke="#7f86ea" stroke-width="7"/>
<circle cx="2133.2" cy="821.1" r="72" fill="#cfdae8" stroke="#26262e" stroke-width="3"/>
<text stroke="#17345c" stroke-width="1.6" x="2094.5" y="840.8" textLength="73.5" lengthAdjust="spacingAndGlyphs" font-size="55.6" fill="#17345c" font-weight="normal">TN</text>
<g clip-path="url(#cR)"><g filter="url(#blur1)">
  <rect x="2280" y="308" width="146" height="146" fill="#e8e6e0"/>
  <rect x="2388" y="350" width="38" height="95" fill="#c6c3bb"/>
  <rect x="2285" y="355" width="9" height="58" fill="#d9442f"/>
  <path d="M2290 455 L2300 432 Q2320 422 2340 428 L2372 428 Q2395 424 2410 436 L2420 455 Z" fill="#7e2b31"/>
  <path d="M2336 424 L2376 424 L2372 455 L2340 455 Z" fill="#b48c74"/>
  <path d="M2298 330 Q2300 308 2345 306 Q2392 308 2394 330 L2392 372 L2384 372 Q2380 340 2346 334 Q2312 336 2312 368 L2302 360 Z" fill="#1b1816"/>
  <path d="M2305 365 Q2304 334 2346 332 Q2386 334 2386 372 Q2388 412 2370 430 Q2350 444 2330 430 Q2306 412 2305 365 Z" fill="#c9a68c"/>
  <ellipse cx="2346" cy="350" rx="30" ry="14" fill="#d0b09a"/>
  <path d="M2308 388 Q2312 430 2348 442 Q2384 430 2386 388 Q2382 414 2368 418 L2350 420 L2330 418 Q2314 414 2308 388 Z" fill="#1d1715"/>
  <path d="M2331 398 Q2350 390 2371 398" stroke="#1d1715" stroke-width="5" fill="none"/>
  <ellipse cx="2350" cy="405" rx="12" ry="3.5" fill="#b98078"/>
  <path d="M2319 357 L2340 354 M2358 354 L2380 357" stroke="#221a16" stroke-width="3.2"/>
  <ellipse cx="2330" cy="366" rx="6" ry="2.6" fill="#3a2a22"/><ellipse cx="2368" cy="366" rx="6" ry="2.6" fill="#3a2a22"/>
  <ellipse cx="2302" cy="382" rx="4" ry="9" fill="#b99478"/>
</g></g>
<g clip-path="url(#cS)"><g filter="url(#blur1)">
  <rect x="2060" y="528" width="146" height="146" fill="#b3a293"/>
  <g stroke="#6e5848" stroke-width="2.2">
  <path d="M2060 538 L2206 538 M2060 548 L2206 548 M2060 558 L2206 558 M2060 568 L2206 568 M2060 578 L2206 578 M2060 590 L2097 590 M2060 602 L2097 602 M2060 614 L2097 614 M2060 626 L2097 626 M2060 638 L2097 638"/>
  <path d="M2080 532 L2080 538 M2110 538 L2110 548 M2140 532 L2140 538 M2170 538 L2170 548 M2090 548 L2090 558 M2155 548 L2155 558 M2075 558 L2075 568 M2190 558 L2190 568 M2070 590 L2070 602 M2085 602 L2085 614 M2072 626 L2072 638 M2120 528 L2120 538 M2185 528 L2185 538 M2125 558 L2125 568 M2105 568 L2105 578 M2165 568 L2165 578 M2088 578 L2088 590"/>
  </g>
  <rect x="2092" y="540" width="16" height="7" fill="#d6cabe"/><rect x="2160" y="560" width="18" height="7" fill="#d6cabe"/><rect x="2066" y="605" width="14" height="7" fill="#d6cabe"/><rect x="2066" y="628" width="14" height="7" fill="#d6cabe"/><rect x="2124" y="540" width="14" height="7" fill="#8a7060"/>
  <path d="M2094 588 Q2150 582 2206 584 L2206 652 L2094 652 Z" fill="#1b2342"/>
  <path d="M2142 600 Q2168 594 2198 598 L2200 660 L2140 660 Z" fill="#3e1922"/>
  <path d="M2148 608 L2196 608 M2148 620 L2196 620 M2148 632 L2196 632 M2148 644 L2196 644" stroke="#8a2a3a" stroke-width="3" stroke-dasharray="3 3"/>
  <path d="M2120 604 Q2132 598 2146 604 L2146 660 L2114 660 Z" fill="#141214"/>
  <ellipse cx="2137" cy="567" rx="15" ry="11" fill="#121010"/>
  <ellipse cx="2141" cy="587" rx="12.5" ry="15.5" fill="#a87a5a"/>
  <path d="M2130 583 L2152 583" stroke="#3a2a22" stroke-width="1.5"/>
  <path d="M2127 600 Q2124 616 2132 644 L2144 644 Q2138 622 2142 603 Z" fill="#a37252"/>
  <path d="M2148 604 Q2158 608 2155 628 L2148 628 Z" fill="#8a6048"/>
  <rect x="2060" y="652" width="146" height="22" fill="#2e2e32"/>
  <path d="M2070 656 L2130 656 M2068 661 L2128 661 M2072 666 L2126 666" stroke="#4a4a50" stroke-width="1.5"/>
  <ellipse cx="2165" cy="666" rx="30" ry="8" fill="#18181a"/>
  <path d="M2080 660 Q2130 650 2185 668" stroke="#55555c" stroke-width="2" fill="none"/>
  <path d="M2068 652 L2125 652" stroke="#3a3a3e" stroke-width="3"/>
</g></g>
<g clip-path="url(#cD)"><g filter="url(#blur1)">
  <rect x="2280" y="748" width="146" height="146" fill="#d9c7b0"/>
  <rect x="2280" y="748" width="146" height="20" fill="#f0ebe4"/>
  <path d="M2283 800 L2345 765 L2352 772 L2288 810 Z" fill="#b8895a"/>
  <path d="M2288 812 L2345 782 L2342 845 L2288 858 Z" fill="#ecdfca"/>
  <path d="M2300 808 L2342 790 M2296 822 L2340 805" stroke="#c8a880" stroke-width="2"/>
  <rect x="2312" y="803" width="10" height="11" fill="#a58ad0"/>
  <path d="M2286 830 L2318 826 L2320 846 L2286 850 Z" fill="#e6c8d0"/>
  <path d="M2345 770 L2420 782 L2420 792 L2345 784 Z" fill="#aab4c6"/>
  <path d="M2388 792 L2426 800 L2426 880 L2392 880 Z" fill="#a09080"/>
  <rect x="2400" y="805" width="5" height="60" fill="#dadada"/>
  <ellipse cx="2414" cy="858" rx="10" ry="8" fill="#6a8a48"/>
  <path d="M2283 845 Q2308 838 2336 848 L2338 895 L2283 895 Z" fill="#2a2727"/>
  <path d="M2290 852 Q2300 846 2310 852 M2296 866 Q2306 860 2316 866" stroke="#9a9590" stroke-width="2" fill="none"/>
  <path d="M2326 818 L2338 812 L2348 870 L2336 874 Z" fill="#2a2828"/>
  <path d="M2336 810 Q2336 782 2350 776 L2362 772 L2372 778 Q2388 782 2388 806 L2384 814 L2338 814 Z" fill="#3c2c22"/>
  <ellipse cx="2360" cy="828" rx="22" ry="29" fill="#dab8a2"/>
  <path d="M2338 820 Q2348 815 2359 820 Q2370 815 2381 820 L2379 834 Q2369 839 2359 830 Q2348 839 2340 834 Z" fill="#a694d2"/>
  <path d="M2348 846 Q2360 841 2372 846" stroke="#3a2c24" stroke-width="3.5" fill="none"/>
  <path d="M2352 854 Q2360 860 2370 854" stroke="#6a4a3a" stroke-width="3" fill="none"/>
  <path d="M2298 895 L2312 858 Q2326 850 2338 856 L2340 895 Z" fill="#deaa4c"/>
  <path d="M2382 870 Q2400 864 2416 880 L2420 895 L2378 895 Z" fill="#deaa4c"/>
  <path d="M2322 860 Q2350 872 2402 840 L2410 858 Q2385 880 2372 895 L2338 895 Q2332 878 2318 872 Z" fill="#8a2436"/>
  <path d="M2322 866 Q2352 878 2404 846" stroke="#f4f4f4" stroke-width="3.2" fill="none"/>
  <path d="M2326 876 Q2356 886 2406 854" stroke="#2c3456" stroke-width="3.2" fill="none"/>
  <path d="M2344 880 L2350 895 M2360 878 L2364 895" stroke="#f4f4f4" stroke-width="3"/>
</g></g>
<g clip-path="url(#cB)"><g filter="url(#blur1)">
  <rect x="2185" y="1135" width="118" height="118" fill="#fcfcfc"/>
  <path d="M2188 1232 Q2203 1214 2222 1210 L2262 1210 Q2283 1214 2298 1232 L2302 1252 L2184 1252 Z" fill="#6f87d8"/>
  <ellipse cx="2244" cy="1158" rx="30" ry="22" fill="#2e2e2e"/>
  <ellipse cx="2244" cy="1182" rx="23" ry="29" fill="#a87256"/>
  <path d="M2222 1184 Q2226 1208 2244 1211 Q2262 1208 2266 1184 Q2258 1198 2244 1196 Q2230 1198 2222 1184 Z" fill="#4c4a4a"/>
  <path d="M2232 1216 L2244 1233 L2256 1216" stroke="#5a70c0" stroke-width="2" fill="none"/>
</g></g>
<text x="2039.5" y="491.5" textLength="133" lengthAdjust="spacingAndGlyphs" font-size="23.5" fill="#fff" font-weight="normal">Cheri Mey...</text>
<text x="2260" y="491.5" textLength="130" lengthAdjust="spacingAndGlyphs" font-size="23.5" fill="#fff" font-weight="normal">Rajkumar ...</text>
<text x="2039.7" y="711" textLength="127" lengthAdjust="spacingAndGlyphs" font-size="23.5" fill="#fff" font-weight="normal">Sameer S...</text>
<text x="2259.3" y="711" textLength="138" lengthAdjust="spacingAndGlyphs" font-size="23.5" fill="#fff" font-weight="normal">Itumeleng ...</text>
<text x="2090.6" y="931" textLength="85" lengthAdjust="spacingAndGlyphs" font-size="23.5" fill="#fff" font-weight="normal">Tim Nel</text>
<text x="2260" y="931" textLength="137.5" lengthAdjust="spacingAndGlyphs" font-size="23.5" fill="#fff" font-weight="normal">Debnil Dut...</text>
<g transform="translate(2211 481.5)">
  <rect x="-4.6" y="-11.5" width="9.3" height="16.7" rx="4.6" fill="#fff"/>
  <path d="M-8 -0.5 Q-8 7.5 0 7.5 Q8 7.5 8 -0.5 M0 7.5 L0 12" fill="none" stroke="#fff" stroke-width="1.8"/>
  <path d="M-11.5 -11 L11.5 11.5" stroke="#1f1f1f" stroke-width="4.2"/>
  <path d="M-11.5 -11 L11.5 11.5" stroke="#fff" stroke-width="1.9" stroke-linecap="round"/>
</g>
<g transform="translate(2211 701)">
  <rect x="-4.6" y="-11.5" width="9.3" height="16.7" rx="4.6" fill="#fff"/>
  <path d="M-8 -0.5 Q-8 7.5 0 7.5 Q8 7.5 8 -0.5 M0 7.5 L0 12" fill="none" stroke="#fff" stroke-width="1.8"/>
  <path d="M-11.5 -11 L11.5 11.5" stroke="#1f1f1f" stroke-width="4.2"/>
  <path d="M-11.5 -11 L11.5 11.5" stroke="#fff" stroke-width="1.9" stroke-linecap="round"/>
</g>
<g transform="translate(2431 481.5)">
  <rect x="-4.6" y="-11.5" width="9.3" height="16.7" rx="4.6" fill="#fff"/>
  <path d="M-8 -0.5 Q-8 7.5 0 7.5 Q8 7.5 8 -0.5 M0 7.5 L0 12" fill="none" stroke="#fff" stroke-width="1.8"/>
  <path d="M-11.5 -11 L11.5 11.5" stroke="#1f1f1f" stroke-width="4.2"/>
  <path d="M-11.5 -11 L11.5 11.5" stroke="#fff" stroke-width="1.9" stroke-linecap="round"/>
</g>
<g transform="translate(2431 701)">
  <rect x="-4.6" y="-11.5" width="9.3" height="16.7" rx="4.6" fill="#fff"/>
  <path d="M-8 -0.5 Q-8 7.5 0 7.5 Q8 7.5 8 -0.5 M0 7.5 L0 12" fill="none" stroke="#fff" stroke-width="1.8"/>
  <path d="M-11.5 -11 L11.5 11.5" stroke="#1f1f1f" stroke-width="4.2"/>
  <path d="M-11.5 -11 L11.5 11.5" stroke="#fff" stroke-width="1.9" stroke-linecap="round"/>
</g>
<g transform="translate(2431 920.5)">
  <rect x="-4.6" y="-11.5" width="9.3" height="16.7" rx="4.6" fill="#fff"/>
  <path d="M-8 -0.5 Q-8 7.5 0 7.5 Q8 7.5 8 -0.5 M0 7.5 L0 12" fill="none" stroke="#fff" stroke-width="1.8"/>
  <path d="M-11.5 -11 L11.5 11.5" stroke="#1f1f1f" stroke-width="4.2"/>
  <path d="M-11.5 -11 L11.5 11.5" stroke="#fff" stroke-width="1.9" stroke-linecap="round"/>
</g>
</svg>
</div>
</body></html>
